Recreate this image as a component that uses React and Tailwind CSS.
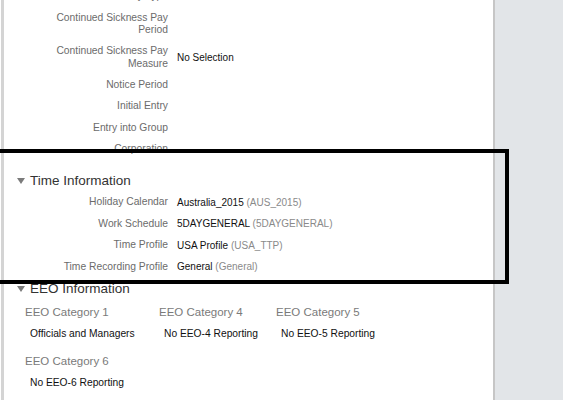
import React from 'react';

const TOP_ROWS = [
  { label: ['Continued Sickness Pay Type'] },
  { label: ['Continued Sickness Pay', 'Period'] },
  { label: ['Continued Sickness Pay', 'Measure'], value: 'No Selection' },
  { label: ['Notice Period'] },
  { label: ['Initial Entry'] },
  { label: ['Entry into Group'] },
  { label: ['Corporation'] },
];

const TIME_ROWS = [
  { label: 'Holiday Calendar', value: 'Australia_2015', code: 'AUS_2015' },
  { label: 'Work Schedule', value: '5DAYGENERAL', code: '5DAYGENERAL' },
  { label: 'Time Profile', value: 'USA Profile', code: 'USA_TTP' },
  { label: 'Time Recording Profile', value: 'General', code: 'General' },
];

// column widths follow the reference grid
const EEO_ROWS = [
  [
    { label: 'EEO Category 1', value: 'Officials and Managers', w: 'w-[134px]' },
    { label: 'EEO Category 4', value: 'No EEO-4 Reporting', w: 'w-[117px]' },
    { label: 'EEO Category 5', value: 'No EEO-5 Reporting', w: 'w-[117px]' },
  ],
  [{ label: 'EEO Category 6', value: 'No EEO-6 Reporting', w: 'w-[134px]' }],
];

const font = { fontFamily: '"Liberation Sans", Arial, sans-serif' };

const Caret = () => (
  <svg width="8" height="6" viewBox="0 0 8 6" className="shrink-0">
    <polygon points="0,0 8,0 4,6" fill="#7b7b7b" />
  </svg>
);

const SectionHeading = ({ title, className }) => (
  <div className={`flex items-center h-[21px] pl-[13px] ${className}`}>
    <Caret />
    <span className="ml-[5px] text-[13.5px] text-[#333] leading-none">{title}</span>
  </div>
);

const App = () => {
  return (
    <div className="relative w-[574px] h-[400px] overflow-hidden flex bg-white" style={font}>
      {/* main content */}
      <div className="w-[492px] h-full border-l-[3px] border-[#d4d4d4] ml-[1px] bg-white">
        <div className="-mt-[14.25px]">
          {TOP_ROWS.map((row, i) => (
            <div
              key={i}
              className={`flex items-center ${row.label.length > 1 ? 'h-[33.5px]' : 'h-[21.5px]'}`}
            >
              <div className="w-[164px] text-right text-[10.3px] leading-[12.5px] text-[#6b6b6b]">
                {row.label.map((l) => (
                  <div key={l}>{l}</div>
                ))}
              </div>
              {row.value && (
                <div className="pl-[9px] text-[10px] text-[#111]">{row.value}</div>
              )}
            </div>
          ))}

          <SectionHeading title="Time Information" className="mt-[10px]" />
          {TIME_ROWS.map((row) => (
            <div key={row.label} className="flex items-center h-[21.5px] text-[10px]">
              <div className="w-[164px] text-right text-[10.3px] text-[#6b6b6b]">{row.label}</div>
              <div className="pl-[9px] text-[#111]">
                {row.value} <span className="text-[#8a8a8a]">({row.code})</span>
              </div>
            </div>
          ))}

          <SectionHeading title="EEO Information" className="mt-[1px]" />
          <div className="pl-[21px] pt-[5px]">
            {EEO_ROWS.map((items, i) => (
              <div key={i} className={`flex ${i > 0 ? 'mt-[11px]' : ''}`}>
                {items.map((item) => (
                  <div key={item.label} className={`${item.w} shrink-0`}>
                    <div className="text-[11.5px] leading-[16px] text-[#7a7a7a]">{item.label}</div>
                    <div className="mt-[6px] pl-[5px] text-[10.25px] leading-[16px] text-[#111] whitespace-nowrap">
                      {item.value}
                    </div>
                  </div>
                ))}
              </div>
            ))}
          </div>
        </div>
      </div>

      {/* right side panel */}
      <div className="w-[2px] h-full bg-[#c6c6c6]" />
      <div className="w-[68px] h-full bg-[#e2e5e8]" />
      <div className="flex-1 h-full bg-white" />

      {/* highlight annotation */}
      <div className="absolute left-[-4px] top-[149px] w-[513px] h-[135px] border-[4px] border-black pointer-events-none" />
    </div>
  );
};

export default App;
